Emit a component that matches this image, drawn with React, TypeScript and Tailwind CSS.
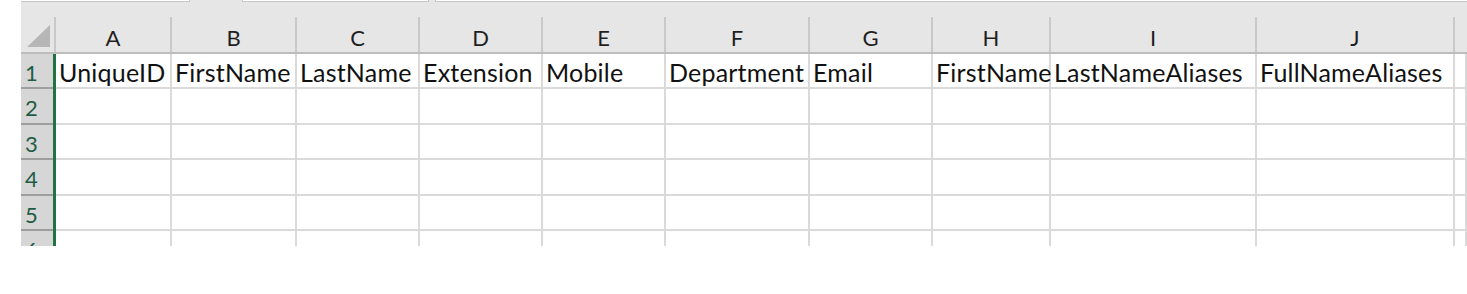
const columns = [
  { key: "A", title: "UniqueID", w: "w-[116px]" },
  { key: "B", title: "FirstName", w: "w-[125px]" },
  { key: "C", title: "LastName", w: "w-[123px]" },
  { key: "D", title: "Extension", w: "w-[123px]" },
  { key: "E", title: "Mobile", w: "w-[123px]" },
  { key: "F", title: "Department", w: "w-[144px]" },
  { key: "G", title: "Email", w: "w-[123px]" },
  { key: "H", title: "FirstName", w: "w-[118px]" },
  { key: "I", title: "LastNameAliases", w: "w-[206px]" },
  { key: "J", title: "FullNameAliases", w: "w-[198px]" },
  { key: "K", title: "", w: "flex-1" },
];

const rowHeights = ["h-[35px]", "h-[36px]", "h-[35px]", "h-[36px]", "h-[35px]", "h-[36px]"];

const font = { fontFamily: "Lato, 'Open Sans', sans-serif" };

const HeaderRow = () => (
  <div className="flex h-[52px] bg-[#e6e6e6] border-b-2 border-[#bdbdbd]">
    {/* select-all corner */}
    <div className="flex w-[35px] shrink-0">
      <div className="flex-1 flex items-end justify-end pb-[5px] pr-[4px]">
        <svg width="23" height="22" viewBox="0 0 23 22">
          <polygon points="23,0 23,22 0,22" fill="#b6b6b6" />
        </svg>
      </div>
      <div className="w-[2px] h-[35px] self-end bg-[#c9c9c9]" />
    </div>
    {columns.map((col) => (
      <div key={col.key} className={`flex shrink-0 ${col.w}`}>
        <div className="flex-1 pt-[21px] leading-[28px] text-[22px] text-center text-[#1f1f1f]">
          {col.key !== "K" ? col.key : ""}
        </div>
        {col.key !== "K" && <div className="w-[2px] h-[35px] self-end bg-[#c9c9c9]" />}
      </div>
    ))}
  </div>
);

const Row = ({ n, h }: { n: number; h: string }) => (
  <div className={`flex shrink-0 ${h}`}>
    <div className="flex w-[35px] shrink-0">
      <div className="flex-1 bg-[#d6d6d6] border-b-2 border-[#9e9e9e] pl-[4px] pt-[3px] text-[22px] leading-[31px] text-[#1e5c45]">
        {n}
      </div>
      <div className="w-[3px] bg-[#217346]" />
    </div>
    {columns.map((col) => (
      <div
        key={col.key}
        className={`shrink-0 ${col.w} border-r-2 border-b-2 border-[#dadada] pl-[3px] pt-[2px] text-[25px] tracking-[0.2px] leading-[32px] text-[#111] whitespace-nowrap`}
      >
        {n === 1 ? col.title : ""}
      </div>
    ))}
  </div>
);

export default function App() {
  return (
    <div className="w-[1467px] h-[294px] bg-white overflow-hidden" style={font}>
      <div className="ml-[21px] h-[246px] flex flex-col overflow-hidden bg-white">
        {/* edge of formula bar above the grid */}
        <div className="flex h-[3px] shrink-0 bg-[#e6e6e6]">
          <div className="w-[169px] h-[2px] bg-white border-b border-r border-[#c6c6c6]" />
          <div className="w-[52px]" />
          <div className="w-[187px] h-[2px] bg-white border-b border-x border-[#c6c6c6]" />
          <div className="w-[6px]" />
          <div className="flex-1 h-[2px] bg-white border-b border-l border-[#c6c6c6]" />
        </div>
        <HeaderRow />
        {rowHeights.map((h, i) => (
          <Row key={i} n={i + 1} h={h} />
        ))}
      </div>
    </div>
  );
}
